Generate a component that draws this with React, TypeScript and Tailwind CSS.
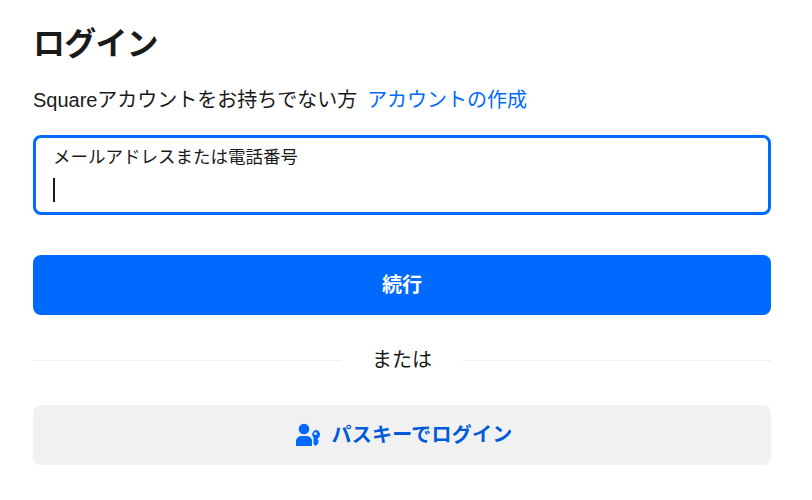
export default function App() {
  return (
    <div className="h-[500px] w-[812px] overflow-hidden bg-white pl-[33px] pr-[41px] text-[#1a1a1a] font-['Liberation_Sans','Noto_Sans_CJK_JP',sans-serif]">
      <h1 className="pt-[24px] text-[32px] font-bold leading-[40px] tracking-[-0.8px]">ログイン</h1>

      <p className="mt-[16px] flex h-[40px] items-center gap-[10px] text-[20px]">
        <span className="tracking-[-0.02px]">Squareアカウントをお持ちでない方</span>
        <a className="text-[#006aff]">アカウントの作成</a>
      </p>

      {/* Email field */}
      <div className="mt-[15px] h-[80px] rounded-[8px] border-[3px] border-[#006aff] pl-[17px] pt-[7px]">
        <div className="text-[17.5px] leading-[24px]">メールアドレスまたは電話番号</div>
        <div className="mt-[9px] h-[24px] w-[2px] bg-[#1a1a1a]" />
      </div>

      <button className="mt-[40px] flex h-[60px] w-full items-center justify-center rounded-[8px] bg-[#006aff] text-[20px] font-bold text-white">
        続行
      </button>

      {/* Divider */}
      <div className="mt-[15px] flex h-[60px] items-center">
        <div className="h-px flex-1 bg-[#f0f0f0]" />
        <span className="px-[30px] text-[20px]">または</span>
        <div className="h-px flex-1 bg-[#f0f0f0]" />
      </div>

      <button className="mt-[15px] flex h-[60px] w-full items-center justify-center gap-[11px] rounded-[8px] bg-[#f1f1f1] pl-[5px] text-[20px] font-bold tracking-[0.25px] text-[#005ad9]">
        <svg width="24" height="24" viewBox="0 0 24 24" fill="#006aff">
          <circle cx="8" cy="6" r="5.3" />
          <path d="M0 23v-4.5C0 15 2.8 13 6 13h4c2 0 3.6.6 4.5 1.6 .4 1 .8 1.6 1.5 2.2V23z" />
          <path fillRule="evenodd" d="M19.5 7a4.5 4.5 0 0 1 2.2 8.4v1.4l1.5 1.1-1.5 1.1 1.1 1-1.1 1.1-2.2 1.9-2-1.8v-6.8A4.5 4.5 0 0 1 19.5 7zm0 2.3a1.4 1.4 0 1 0 0 2.8 1.4 1.4 0 0 0 0-2.8z" />
        </svg>
        <span>パスキーでログイン</span>
      </button>
    </div>
  );
}
